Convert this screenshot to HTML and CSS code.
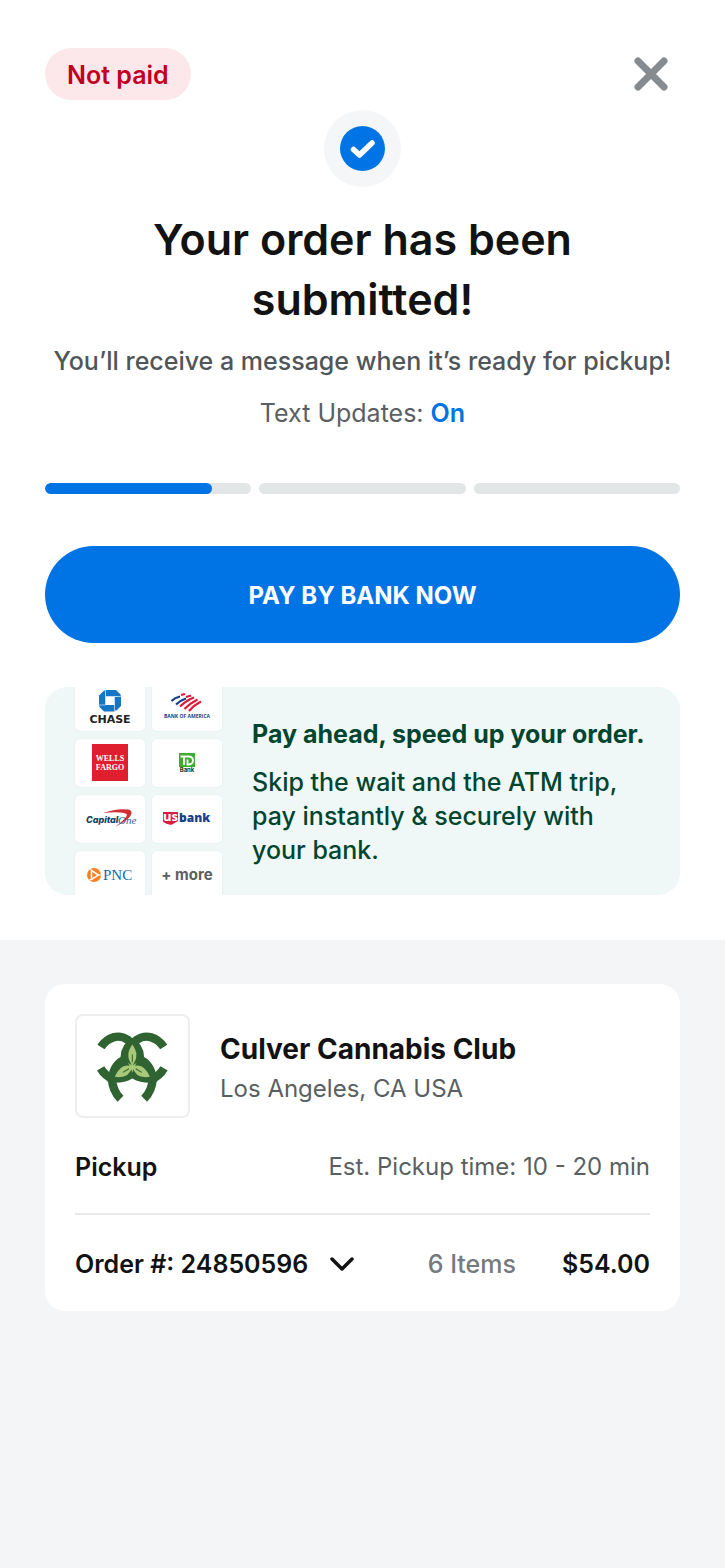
FILE: index.html
```html
<!DOCTYPE html>
<html lang="en">
<head>
<meta charset="utf-8">
<meta name="viewport" content="width=device-width, initial-scale=1">
<title>Order submitted</title>
<link rel="stylesheet" href="styles.css">
</head>
<body>
<main class="page">
  <section class="status">
    <header class="topbar">
      <span class="badge">Not paid</span>
      <button class="close" type="button" aria-label="Close">
        <svg width="34" height="34" viewBox="0 0 34 34"><path d="M4 4 30 30M30 4 4 30" fill="none" stroke="#858b8f" stroke-width="7" stroke-linecap="round"/></svg>
      </button>
    </header>
    <div class="check">
      <svg width="77" height="77" viewBox="0 0 77 77"><circle cx="38.500" cy="38.500" r="38.500" fill="#f4f6f8"/><circle cx="38.500" cy="38.500" r="22.500" fill="#0074e4"/><path d="M29.500 39.500 35.500 45 48 33" fill="none" stroke="#fff" stroke-width="5.500" stroke-linecap="round" stroke-linejoin="round"/></svg>
    </div>
    <h1 class="title">Your order has been submitted!</h1>
    <p class="message">You’ll receive a message when it’s ready for pickup!</p>
    <p class="updates">Text Updates: <a class="updates-link" href="#">On</a></p>
    <div class="progress" role="progressbar" aria-label="Order progress" aria-valuenow="27" aria-valuemin="0" aria-valuemax="100">
      <span class="step"><span class="step-fill" style="width:81%"></span></span>
      <span class="step"></span>
      <span class="step"></span>
    </div>
    <button class="pay" type="button">PAY BY BANK NOW</button>
    <section class="promo">
      <div class="banks">
        <div class="bank">
          <svg width="70" height="48" viewBox="0 0 70 48" role="img" aria-label="Chase">
            <g fill="#1576c8"><path d="M30.500 7H41L45.500 11.500V13.500H30.500Z"/><path d="M46 12.500V23L41.500 27.500H39.500V14Z"/><path d="M40 28.500H29L24.500 24V22H40Z"/><path d="M24 23V12.500L29 7.500H30.500V22Z"/></g>
            <path d="M30.500 13.500H39.500V22H30.500Z" fill="#fff"/><path d="M30.500 7V13.500M46 13.500H39.500M39.500 28.500V22M24 22H30.500" stroke="#fff" stroke-width=".6"/>
            <text class="chase" x="35" y="40" text-anchor="middle">CHASE</text>
          </svg>
        </div>
        <div class="bank">
          <svg width="70" height="48" viewBox="0 0 70 48" role="img" aria-label="Bank of America">
            <g fill="none" stroke-width="2.200"><path d="M19.500 18Q23 14.500 28 13.500M24 21.500Q28 17.500 34 15.500" stroke="#153e8a"/><path d="M29 12 33 11M34 14 39 12.500M28 23.500Q35 17 42 14.500M32.500 26Q38.500 20 45.500 16.500M37 28Q42 22 49 18.500" stroke="#e31837"/></g>
            <text class="boa" x="35" y="35" text-anchor="middle">BANK OF AMERICA</text>
          </svg>
        </div>
        <div class="bank">
          <svg width="70" height="48" viewBox="0 0 70 48" role="img" aria-label="Wells Fargo">
            <path d="M17 5H53V42H17Z" fill="#df1f2d"/>
            <text class="wells" x="35" y="22" text-anchor="middle">WELLS</text><text class="wells" x="35" y="31" text-anchor="middle">FARGO</text>
          </svg>
        </div>
        <div class="bank">
          <svg width="70" height="48" viewBox="0 0 70 48" role="img" aria-label="TD Bank">
            <path d="M27 14H43V28H27Z" fill="#3faa35"/><path d="M28.500 17.500H37Q41 18 41 21.500T37 25.500H35.500V20.500M32 17.500V26" fill="none" stroke="#fff" stroke-width="1.800"/>
            <text class="td" x="35" y="33" text-anchor="middle">Bank</text>
          </svg>
        </div>
        <div class="bank">
          <svg width="70" height="48" viewBox="0 0 70 48" role="img" aria-label="Capital One">
            <path d="M28 18Q42 13 53 14.500C60 16 56 23 47 28L40 32Q52 23 52 19.500Q48 16 28 18Z" fill="#d22e35"/>
            <text class="capital" x="11" y="28">Capital</text><text class="one" x="43" y="29">One</text>
          </svg>
        </div>
        <div class="bank">
          <svg width="70" height="48" viewBox="0 0 70 48" role="img" aria-label="US Bank">
            <path d="M11 17H26V26Q23 28 19 30Q14 29 11 27Z" fill="#d71f42"/>
            <text class="us" x="11" y="26">us</text><text class="usbank" x="27" y="27">bank</text>
          </svg>
        </div>
        <div class="bank">
          <svg width="70" height="48" viewBox="0 0 70 48" role="img" aria-label="PNC">
            <circle cx="19" cy="24" r="7" fill="#f58025"/><path d="M16.500 19.500 23.500 24 16.500 28.500Z" fill="none" stroke="#fff" stroke-width="1.500"/><path d="M16.500 19.500 15 17.500M23.500 24H26M16.500 28.500 14 29" stroke="#fff" stroke-width="1"/>
            <text class="pnc" x="28" y="29">PNC</text>
          </svg>
        </div>
        <div class="bank bank-more">+ more</div>
      </div>
      <div class="promo-copy">
        <h2 class="promo-title">Pay ahead, speed up your order.</h2>
        <p class="promo-text">Skip the wait and the ATM trip, pay instantly &amp; securely with your bank.</p>
      </div>
    </section>
  </section>
  <section class="details">
    <article class="card">
      <div class="store">
        <div class="store-logo">
          <svg width="111" height="100" viewBox="34 34 329 296" role="img" aria-label="Culver Cannabis Club logo">
            <g fill="none" stroke="#2f6432" stroke-width="25">
              <path d="M105 126C124 96 158 86 184 104Q206 121 216 152"/>
              <path d="M291 126C272 96 238 86 212 104Q190 121 180 152"/>
              <path d="M104 189Q117 211 142 222"/>
              <path d="M292 189Q279 211 254 222"/>
              <path d="M137 215Q139 256 163 279"/>
              <path d="M259 215Q257 256 233 279"/>
            </g>
            <path d="M163 155Q165 115 198 99Q231 115 233 155Q268 175 272 228L250 232Q220 232 198 219Q176 232 148 232L124 228Q128 175 163 155Z" fill="#2f6432"/>
            <g fill="#a9c878"><path d="M198 118Q174 151 198 180Q222 151 198 118Z"/><path d="M146 214Q165 169 198 184Q188 221 146 214Z"/><path d="M250 214Q231 169 198 184Q208 221 250 214Z"/></g>
            <path d="M198 148V172M170 201 188 190M226 201 208 190" fill="none" stroke="#2f6432" stroke-width="3"/>
            <path d="M198 168 201 179 211 172 205 183 216 186 205 189 209 197 201 192 198 202 195 192 187 197 191 189 180 186 191 183 185 172 195 179Z" fill="#a9c878"/>
          </svg>
        </div>
        <div class="store-copy">
          <h2 class="store-name">Culver Cannabis Club</h2>
          <p class="store-place">Los Angeles, CA USA</p>
        </div>
      </div>
      <div class="pickup">
        <strong class="pickup-label">Pickup</strong>
        <span class="pickup-time">Est. Pickup time: 10 - 20 min</span>
      </div>
      <div class="order">
        <button class="order-toggle" type="button" aria-expanded="false">
          <span>Order #: 24850596</span>
          <svg width="24" height="16" viewBox="0 0 24 16"><path d="M2 3 12 13 22 3" fill="none" stroke="#121212" stroke-width="3.500" stroke-linecap="round" stroke-linejoin="round"/></svg>
        </button>
        <span class="items">6 Items</span>
        <strong class="total">$54.00</strong>
      </div>
    </article>
  </section>
</main>
</body>
</html>
```
FILE: styles.css
```css
* { box-sizing: border-box; }
body { margin: 0; background: #f3f5f7; color: #121212; font-family: Inter, "Liberation Sans", sans-serif; font-size: 25px; line-height: 36px; }
h1, h2, p { margin: 0; }
button { border: 0; padding: 0; background: none; color: inherit; font: inherit; cursor: pointer; }
svg { display: block; }
.status { padding: 48px 45px 45px; background: #fff; text-align: center; }
.topbar { display: flex; align-items: center; justify-content: space-between; padding-right: 12px; }
.badge { padding: 9px 22px 7px; border-radius: 26px; background: #fce8ea; color: #c1001f; font-weight: 600; }
.check { display: flex; justify-content: center; margin-top: 10px; }
.title { max-width: 480px; margin: 22px auto 14px; font-size: 43px; line-height: 60px; font-weight: 600; }
.message { color: #505558; font-weight: 500; }
.updates { margin-top: 16px; color: #5a5f62; }
.updates-link { color: #0074e4; font-weight: 600; text-decoration: none; }
.progress { display: grid; grid-template-columns: repeat(3, 1fr); gap: 8px; margin-top: 52px; }
.step { display: block; height: 11px; overflow: hidden; border-radius: 6px; background: #e3e6e7; }
.step-fill { display: block; height: 100%; border-radius: 6px; background: #0074e4; }
.pay { width: 100%; margin-top: 52px; padding: 31px 30px 29px; border-radius: 49px; background: #0074e4; color: #fff; font-size: 24px; font-weight: 700; line-height: 37px; }
.promo { display: flex; align-items: center; gap: 30px; height: 208px; margin-top: 44px; padding-left: 30px; overflow: hidden; border-radius: 22px; background: #eff8f7; color: #00452f; text-align: left; }
.banks { display: grid; grid-template-columns: 70px 70px; gap: 8px 7px; flex: none; }
.bank { height: 48px; overflow: hidden; border-radius: 5px; background: #fff; box-shadow: 0 0 2px #dce9e8; }
.bank-more { color: #5a5f62; font-size: 15px; line-height: 48px; font-weight: 700; text-align: center; }
.chase { fill: #222; font: 700 11px "DejaVu Sans", sans-serif; }
.boa { fill: #153e8a; font: 700 5px "Open Sans", sans-serif; }
.wells { fill: #fff; font: 700 8px "Liberation Serif", serif; }
.td { fill: #163f24; font: 700 6px Inter, sans-serif; }
.capital { fill: #123f63; font: italic 800 9px Inter, sans-serif; }
.one { fill: #246a91; font: italic 11px "Liberation Serif", serif; }
.us { fill: #fff; font: 700 13px "Open Sans", sans-serif; }
.usbank { fill: #17408b; font: 800 12px "Open Sans", sans-serif; }
.pnc { fill: #1769ad; font: 15px "Liberation Serif", serif; }
.promo-copy { min-width: 0; padding: 2px 30px 0 0; }
.promo-title { font-size: 25px; line-height: 34px; font-weight: 700; }
.promo-text { margin-top: 14px; line-height: 34px; font-weight: 500; }
.details { padding: 44px 45px; }
.card { padding: 30px 30px 29px; border-radius: 20px; background: #fff; }
.store { display: flex; align-items: center; gap: 30px; }
.store-logo { flex: none; border: 2px solid #eceeef; border-radius: 8px; overflow: hidden; }
.store-copy { padding-top: 6px; }
.store-name { font-size: 28px; line-height: 40px; font-weight: 700; }
.store-place { color: #5a5f62; font-size: 24px; line-height: 40px; }
.pickup { display: flex; justify-content: space-between; padding: 31px 0 28px; border-bottom: 2px solid #e8e9ea; }
.pickup-label { font-weight: 600; }
.pickup-time { color: #5a5f62; font-size: 24px; }
.order { display: flex; align-items: center; padding-top: 31px; }
.order-toggle { display: flex; align-items: center; gap: 22px; margin-right: auto; font-weight: 600; }
.items { color: #747a7e; font-weight: 500; }
.total { margin-left: 46px; font-weight: 600; }
```
